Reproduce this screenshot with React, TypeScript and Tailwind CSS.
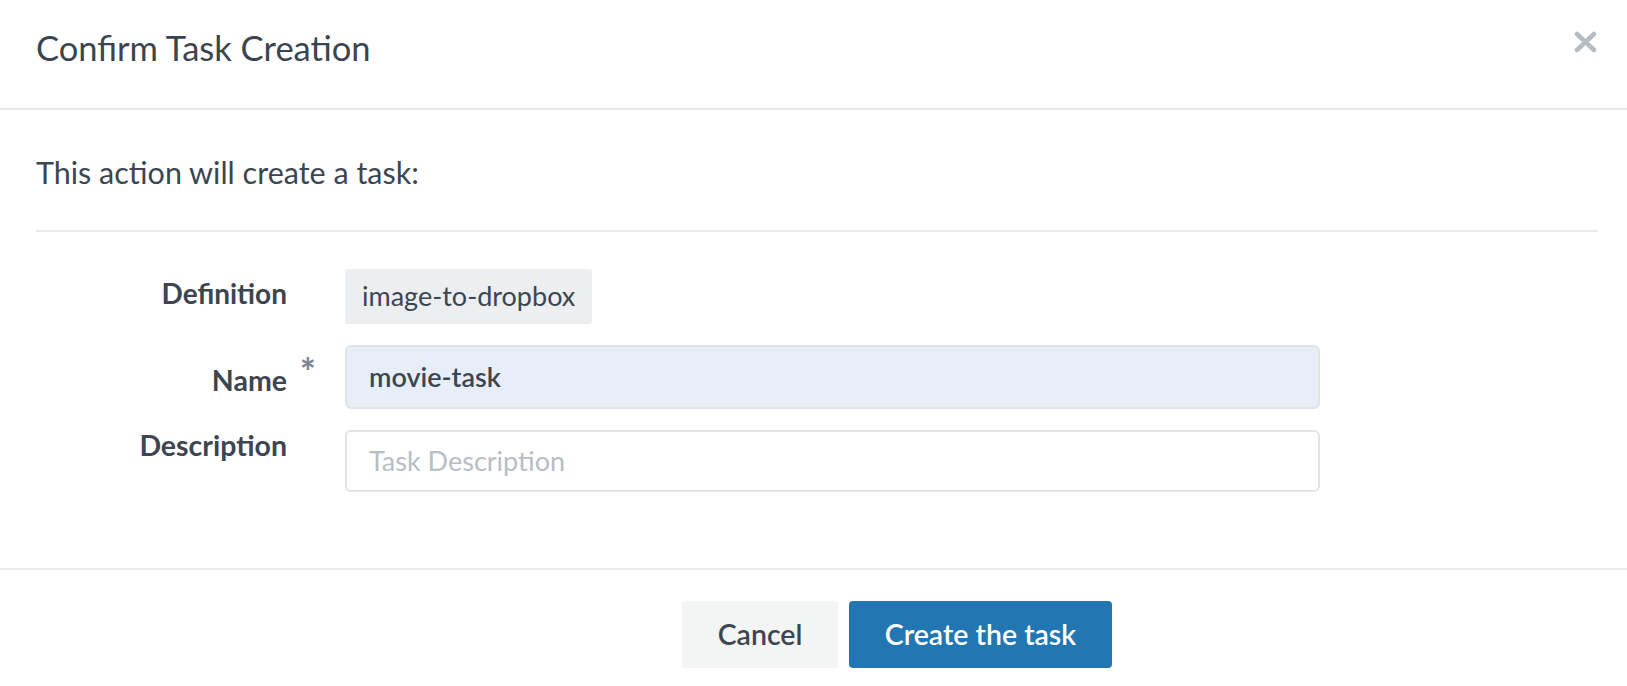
export default function App() {
  return (
    <div className="w-full h-[686px] bg-white text-[#3b4651] overflow-hidden" style={{ fontFamily: "Lato, 'Open Sans', sans-serif" }}>
      <div className="h-[110px] flex items-start justify-between pl-[36px] pr-[30px] pt-[28px] border-b-2 border-[#e8eaea]">
        <h1 className="text-[34.5px] leading-[40px] font-normal text-[#3a4550]">Confirm Task Creation</h1>
        <svg width="23" height="22" viewBox="0 0 23 22" className="mt-[3px]">
          <path d="M3 3 L20 19 M20 3 L3 19" stroke="#b4bcc4" strokeWidth="4.5" strokeLinecap="round" />
        </svg>
      </div>

      <div className="pl-[36px] pr-[29px]">
        <p className="pt-[43px] pb-[39px] text-[30.5px] leading-[38px]">This action will create a task:</p>
        <div className="border-t-2 border-[#e8eaea]" />

        <div className="pt-[37px] pb-[76px] flex flex-col gap-[21px]">
          <div className="flex">
            <div className="w-[251px] text-right pt-[5px] text-[28px] leading-[38px] font-bold text-[#3d4650]">Definition</div>
            <div className="ml-[58px] h-[55px] flex items-center px-[17px] bg-[#eceeef] rounded-[3px] text-[27px]">image-to-dropbox</div>
          </div>
          <div className="flex">
            <div className="w-[251px] text-right pt-[16px] text-[28.5px] leading-[38px] font-bold text-[#3d4650] relative">
              Name
              <span className="absolute right-[-29px] top-[7px] text-[38px] leading-[38px] font-bold text-[#7b8591]">*</span>
            </div>
            <div className="ml-[58px] w-[975px] h-[64px] flex items-center px-[22px] bg-[#e8eef7] border-2 border-[#dfe4e7] rounded-[6px] text-[27px] font-semibold">movie-task</div>
          </div>
          <div className="flex">
            <div className="w-[251px] text-right pt-0 text-[28.5px] leading-[30px] font-bold text-[#3d4650]">Description</div>
            <div className="ml-[58px] w-[975px] h-[62px] flex items-center px-[22px] bg-white border-2 border-[#e1e5e8] rounded-[6px] text-[27px] text-[#b6bec6]">Task Description</div>
          </div>
        </div>
      </div>

      <div className="border-t-2 border-[#e8eaea] pt-[31px] flex pl-[682px] gap-[11px]">
        <button className="w-[156px] h-[67px] bg-[#f3f5f5] rounded-[3px] text-[28.5px] font-semibold text-[#3d4650]">Cancel</button>
        <button className="w-[263px] h-[67px] bg-[#2276b1] rounded-[4px] text-[28.5px] font-semibold text-white">Create the task</button>
      </div>
    </div>
  );
}
